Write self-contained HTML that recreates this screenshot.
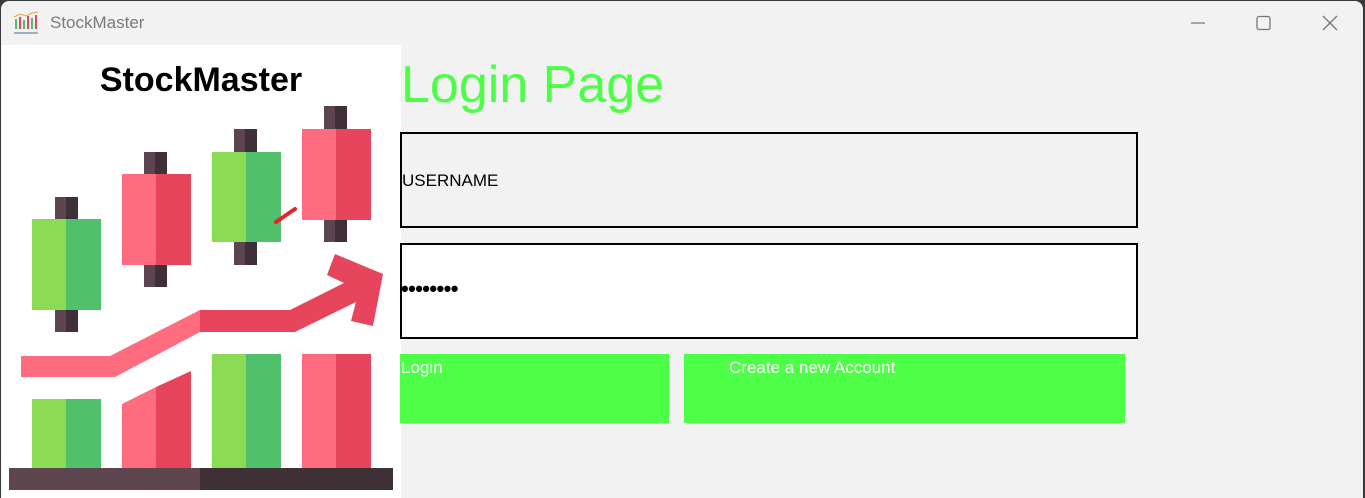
<!DOCTYPE html>
<html><head><meta charset="utf-8"><style>
html,body{margin:0;padding:0;}
body{width:1365px;height:498px;background:#3a3a3a;overflow:hidden;position:relative;font-family:"Liberation Sans",sans-serif;}
.win{position:absolute;left:1px;top:1px;width:1362px;height:497px;background:#f2f2f2;border-radius:8px 8px 0 0;overflow:hidden;}
.t{position:absolute;}
</style></head><body>
<div class="win">
 <svg class="t" style="left:12px;top:10px" width="26" height="24" viewBox="0 0 26 24">
  <rect x="2" y="8" width="2" height="10" fill="#50c06a"/><rect x="6" y="6" width="2" height="12" fill="#e6455c"/>
  <rect x="10" y="9" width="2" height="9" fill="#50c06a"/><rect x="14" y="5" width="2" height="13" fill="#e6455c"/>
  <rect x="18" y="7" width="2" height="11" fill="#50c06a"/><rect x="22" y="4" width="2" height="14" fill="#e6455c"/>
  <polyline points="1,6 7,3 13,5 19,2 25,1" fill="none" stroke="#f0a030" stroke-width="1"/>
  <rect x="1" y="21" width="24" height="2" fill="#a0b0bb"/>
 </svg>
 <div class="t" style="left:49px;top:12px;font-size:17px;color:#7a7a7a;">StockMaster</div>
 <svg class="t" style="left:1180px;top:10px" width="180" height="26">
  <line x1="10" y1="12" x2="24" y2="12" stroke="#777" stroke-width="1.2"/>
  <rect x="76" y="5.5" width="13" height="13" rx="2" fill="none" stroke="#777" stroke-width="1.3"/>
  <line x1="142" y1="5" x2="156" y2="19" stroke="#777" stroke-width="1.3"/><line x1="156" y1="5" x2="142" y2="19" stroke="#777" stroke-width="1.3"/>
 </svg>
 <svg class="t" style="left:1px;top:44px" width="399" height="454" viewBox="2 45 399 454">
  <rect x="2" y="45" width="399" height="454" fill="#fff"/>
  <text x="201" y="91" text-anchor="middle" font-family="Liberation Sans,sans-serif" font-weight="bold" font-size="34" fill="#000">StockMaster</text>
  <g>
   <rect x="55" y="197" width="12" height="135" fill="#5c4550"/><rect x="66" y="197" width="12" height="135" fill="#3f2f38"/>
   <rect x="32" y="219" width="35" height="91" fill="#8cdb55"/><rect x="66" y="219" width="35" height="91" fill="#50c06a"/>
   <rect x="144" y="152" width="12" height="135" fill="#5c4550"/><rect x="155" y="152" width="12" height="135" fill="#3f2f38"/>
   <rect x="122" y="174" width="34" height="91" fill="#ff6b7f"/><rect x="156" y="174" width="35" height="91" fill="#e6455c"/>
   <rect x="234" y="129" width="12" height="136" fill="#5c4550"/><rect x="245" y="129" width="12" height="136" fill="#3f2f38"/>
   <rect x="212" y="152" width="35" height="90" fill="#8cdb55"/><rect x="246" y="152" width="35" height="90" fill="#50c06a"/>
   <rect x="324" y="106" width="12" height="136" fill="#5c4550"/><rect x="335" y="106" width="12" height="136" fill="#3f2f38"/>
   <rect x="302" y="129" width="34" height="91" fill="#ff6b7f"/><rect x="336" y="129" width="35" height="91" fill="#e6455c"/>
   <line x1="276" y1="222" x2="295" y2="209" stroke="#e5232a" stroke-width="4" stroke-linecap="round"/>
   <polygon points="21,356 110,356 200,310 200,332 115,377 21,377" fill="#ff6b7f"/>
   <polygon points="200,310 290,310 344,283 327,275 335,254 383,274 373,326 351,321 356,302 295,332 200,332" fill="#e6455c"/>
   <rect x="32" y="399" width="35" height="70" fill="#8cdb55"/><rect x="66" y="399" width="35" height="70" fill="#50c06a"/>
   <polygon points="122,404 156,387 156,469 122,469" fill="#ff6b7f"/><polygon points="156,387 191,371 191,469 156,469" fill="#e6455c"/>
   <rect x="212" y="354" width="35" height="115" fill="#8cdb55"/><rect x="246" y="354" width="35" height="115" fill="#50c06a"/>
   <rect x="302" y="354" width="34" height="115" fill="#ff6b7f"/><rect x="336" y="354" width="35" height="115" fill="#e6455c"/>
   <rect x="9" y="468" width="192" height="22" fill="#5d4650"/><rect x="200" y="468" width="193" height="22" fill="#3f2f37"/>
  </g>
 </svg>
 <div class="t" style="left:400px;top:54px;font-size:52px;color:#4cff46;line-height:60px;">Login Page</div>
 <div class="t" style="left:399px;top:131px;width:734px;height:92px;border:2px solid #000;background:#f2f2f2;"></div>
 <div class="t" style="left:401px;top:170px;font-size:17px;color:#000;">USERNAME</div>
 <div class="t" style="left:399px;top:242px;width:734px;height:92px;border:2px solid #000;background:#fff;"></div>
 <div class="t" style="left:400px;top:275px;font-size:22px;font-weight:bold;color:#000;letter-spacing:-0.6px;">••••••••</div>
 <div class="t" style="left:399px;top:353px;width:269px;height:69px;background:#4dff47;"></div>
 <div class="t" style="left:400px;top:357px;font-size:17px;color:#fff;">Login</div>
 <div class="t" style="left:683px;top:353px;width:441px;height:69px;background:#4dff47;"></div>
 <div class="t" style="left:728px;top:357px;font-size:17px;color:#fff;">Create a new Account</div>
</div>
</body></html>
